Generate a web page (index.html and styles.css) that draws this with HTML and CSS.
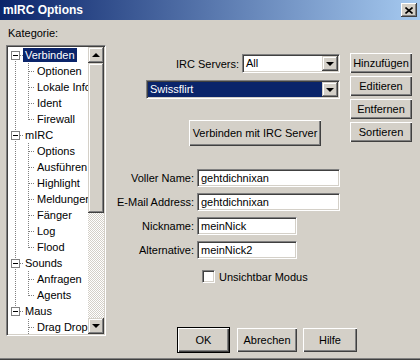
FILE: index.html
```html
<!DOCTYPE html>
<html lang="de">
<head>
    <meta charset="UTF-8">
    <title>mIRC Options</title>
    <link rel="stylesheet" href="styles.css">
</head>
<body>
    <div class="window">
        <div class="titlebar">
            <span>mIRC Options</span>
            <span class="close">
                <svg width="8" height="7" viewBox="0 0 8 7"><path d="M0.5 0.5 L7.5 6.5 M7.5 0.5 L0.5 6.5" stroke="#000" stroke-width="1.6"/></svg>
            </span>
        </div>

        <div class="content">
            <div class="left">
                <div class="caption">Kategorie:</div>
                <div class="tree">
                    <div class="tree-list">
                        <div class="row node first"><span class="gut"><span class="box"></span></span><span class="lbl sel">Verbinden</span></div>
                        <div class="row leaf"><span class="gut"></span><span class="gut2"></span><span class="lbl">Optionen</span></div>
                        <div class="row leaf"><span class="gut"></span><span class="gut2"></span><span class="lbl">Lokale Info</span></div>
                        <div class="row leaf"><span class="gut"></span><span class="gut2"></span><span class="lbl">Ident</span></div>
                        <div class="row leaf"><span class="gut"></span><span class="gut2 end"></span><span class="lbl">Firewall</span></div>
                        <div class="row node"><span class="gut"><span class="box"></span></span><span class="lbl">mIRC</span></div>
                        <div class="row leaf"><span class="gut"></span><span class="gut2"></span><span class="lbl">Options</span></div>
                        <div class="row leaf"><span class="gut"></span><span class="gut2"></span><span class="lbl">Ausführen</span></div>
                        <div class="row leaf"><span class="gut"></span><span class="gut2"></span><span class="lbl">Highlight</span></div>
                        <div class="row leaf"><span class="gut"></span><span class="gut2"></span><span class="lbl">Meldungen</span></div>
                        <div class="row leaf"><span class="gut"></span><span class="gut2"></span><span class="lbl">Fänger</span></div>
                        <div class="row leaf"><span class="gut"></span><span class="gut2"></span><span class="lbl">Log</span></div>
                        <div class="row leaf"><span class="gut"></span><span class="gut2 end"></span><span class="lbl">Flood</span></div>
                        <div class="row node"><span class="gut"><span class="box"></span></span><span class="lbl">Sounds</span></div>
                        <div class="row leaf"><span class="gut"></span><span class="gut2"></span><span class="lbl">Anfragen</span></div>
                        <div class="row leaf"><span class="gut"></span><span class="gut2 end"></span><span class="lbl">Agents</span></div>
                        <div class="row node last"><span class="gut"><span class="box"></span></span><span class="lbl">Maus</span></div>
                        <div class="row leaf"><span class="gut none"></span><span class="gut2"></span><span class="lbl">Drag Drop</span></div>
                    </div>
                    <div class="scrollbar">
                        <span class="sb-btn"><span class="tri-up"></span></span>
                        <span class="thumb"></span>
                        <span class="track"></span>
                        <span class="sb-btn"><span class="tri-down"></span></span>
                    </div>
                </div>
            </div>

            <div class="right">
                <div class="top">
                    <div class="main">
                        <div class="server-row">
                            <span>IRC Servers:</span>
                            <div class="select short"><span class="val">All</span><span class="drop"><span class="tri-down"></span></span></div>
                        </div>
                        <div class="select wide"><span class="val picked">Swissflirt</span><span class="drop"><span class="tri-down"></span></span></div>
                        <div class="btn connect">Verbinden mit IRC Server</div>
                    </div>
                    <div class="side">
                        <div class="btn">Hinzufügen</div>
                        <div class="btn">Editieren</div>
                        <div class="btn">Entfernen</div>
                        <div class="btn">Sortieren</div>
                    </div>
                </div>

                <div class="form">
                    <span class="label">Voller Name:</span>
                    <span class="field long">gehtdichnixan</span>
                    <span class="label">E-Mail Address:</span>
                    <span class="field long">gehtdichnixan</span>
                    <span class="label">Nickname:</span>
                    <span class="field">meinNick</span>
                    <span class="label">Alternative:</span>
                    <span class="field">meinNick2</span>
                </div>

                <div class="check-row">
                    <span class="checkbox"></span>
                    <span>Unsichtbar Modus</span>
                </div>

                <div class="footer">
                    <div class="btn default">OK</div>
                    <div class="btn cancel">Abrechen</div>
                    <div class="btn help">Hilfe</div>
                </div>
            </div>
        </div>
    </div>
</body>
</html>
```

FILE: styles.css
```css
body { margin: 0; font: 11px "Liberation Sans", Arial, sans-serif; color: #000; }
.window { width: 420px; height: 360px; background: #d4d0c8; display: flex; flex-direction: column; overflow: hidden; box-shadow: inset 0 -1px #404040, inset 0 -2px #808080; }

/* title bar */
.titlebar { height: 20px; padding: 0 3px 0 3px; display: flex; align-items: center; justify-content: space-between; background: linear-gradient(to right, #0a246a, #a6caf0); color: #fff; font-size: 12px; font-weight: bold; }
.close { width: 16px; height: 14px; display: flex; align-items: center; justify-content: center; background: #d4d0c8; box-shadow: inset -1px -1px #404040, inset 1px 1px #fff, inset -2px -2px #808080; }

.content { flex: 1; display: flex; }

/* category tree */
.left { width: 100px; margin-left: 6px; padding-top: 7px; }
.caption { height: 13px; line-height: 13px; padding-left: 2px; }
.tree { margin-top: 5px; height: 291px; box-sizing: border-box; display: flex; padding: 1px; background: #fff; border: 1px solid; border-color: #808080 #fff #fff #808080; box-shadow: inset 1px 1px #404040, inset -1px -1px #d4d0c8; }
.tree-list { flex: 1; overflow: hidden; }
.row { height: 16px; display: flex; align-items: center; white-space: nowrap; }

.gut { width: 15px; height: 16px; flex: none; display: flex; align-items: center;
    background: repeating-linear-gradient(to bottom, #808080 0 1px, transparent 1px 2px) 7px 0 / 1px 100% no-repeat; }
.node .gut { background:
    repeating-linear-gradient(to bottom, #808080 0 1px, transparent 1px 2px) 7px 0 / 1px 100% no-repeat,
    repeating-linear-gradient(to right, #808080 0 1px, transparent 1px 2px) 12px 8px / 3px 1px no-repeat; }
.node.first .gut { background:
    repeating-linear-gradient(to bottom, #808080 0 1px, transparent 1px 2px) 7px 100% / 1px 50% no-repeat,
    repeating-linear-gradient(to right, #808080 0 1px, transparent 1px 2px) 12px 8px / 3px 1px no-repeat; }
.node.last .gut { background:
    repeating-linear-gradient(to bottom, #808080 0 1px, transparent 1px 2px) 7px 0 / 1px 50% no-repeat,
    repeating-linear-gradient(to right, #808080 0 1px, transparent 1px 2px) 12px 8px / 3px 1px no-repeat; }
.gut.none { background: none; }
.box { width: 9px; height: 9px; box-sizing: border-box; margin-left: 3px; border: 1px solid #808080;
    background: linear-gradient(#000, #000) center / 5px 1px no-repeat, #fff; }

.gut2 { width: 12px; height: 16px; flex: none; background:
    repeating-linear-gradient(to bottom, #808080 0 1px, transparent 1px 2px) 5px 0 / 1px 100% no-repeat,
    repeating-linear-gradient(to right, #808080 0 1px, transparent 1px 2px) 6px 8px / 6px 1px no-repeat; }
.gut2.end { background:
    repeating-linear-gradient(to bottom, #808080 0 1px, transparent 1px 2px) 5px 0 / 1px 9px no-repeat,
    repeating-linear-gradient(to right, #808080 0 1px, transparent 1px 2px) 6px 8px / 6px 1px no-repeat; }

.lbl { padding: 0 2px; height: 14px; line-height: 14px; }
.lbl.sel { background: #0a246a; color: #fff; }

/* scrollbar */
.scrollbar { width: 16px; flex: none; display: flex; flex-direction: column;
    background: repeating-conic-gradient(#d4d0c8 0 25%, #fff 0 50%) 0 0 / 2px 2px; }
.sb-btn, .thumb, .drop { background: #d4d0c8; box-shadow: inset -1px -1px #404040, inset 1px 1px #d4d0c8, inset -2px -2px #808080, inset 2px 2px #fff; }
.sb-btn { height: 16px; display: flex; align-items: center; justify-content: center; }
.thumb { height: 150px; }
.track { flex: 1; }
.tri-up { width: 0; height: 0; border-left: 4px solid transparent; border-right: 4px solid transparent; border-bottom: 4px solid #000; }
.tri-down { width: 0; height: 0; border-left: 4px solid transparent; border-right: 4px solid transparent; border-top: 4px solid #000; }

/* right side */
.right { margin-left: 40px; padding-top: 34px; width: 266px; display: flex; flex-direction: column; }
.top { display: flex; }
.main { width: 194px; }
.side { width: 62px; margin-left: 10px; margin-top: -1px; display: flex; flex-direction: column; gap: 3px; }

.btn { height: 20px; display: flex; align-items: center; justify-content: center; box-sizing: border-box; background: #d4d0c8; white-space: nowrap;
    box-shadow: inset 1px 1px #fff, inset -1px -1px #404040, inset -2px -2px #808080; }

.server-row { height: 19px; display: flex; align-items: center; justify-content: flex-end; gap: 3px; }
.select { height: 19px; box-sizing: border-box; display: flex; padding: 1px; background: #fff; border: 1px solid; border-color: #808080 #fff #fff #808080; box-shadow: inset 1px 1px #404040, inset -1px -1px #d4d0c8; }
.select.short { width: 98px; }
.select.wide { margin-top: 7px; }
.val { flex: 1; padding-left: 2px; line-height: 15px; }
.val.picked { background: #0a246a; color: #fff; }
.drop { width: 16px; display: flex; align-items: center; justify-content: center; }

.connect { margin: 21px 0 0 43px; width: 132px; height: 26px; }

/* form */
.form { margin-top: 23px; display: grid; grid-template-columns: 48px max-content; column-gap: 3px; row-gap: 6px; align-items: center; }
.label { display: flex; justify-content: flex-end; white-space: nowrap; }
.field { width: 100px; height: 18px; box-sizing: border-box; padding: 1px 3px; line-height: 14px; background: #fff; border: 1px solid; border-color: #808080 #fff #fff #808080; box-shadow: inset 1px 1px #404040, inset -1px -1px #d4d0c8; }
.field.long { width: 143px; }

.check-row { margin: 11px 0 0 56px; height: 13px; display: flex; align-items: center; gap: 4px; }
.checkbox { width: 13px; height: 13px; box-sizing: border-box; background: #fff; border: 1px solid; border-color: #808080 #fff #fff #808080; box-shadow: inset 1px 1px #404040, inset -1px -1px #d4d0c8; }

/* dialog buttons */
.footer { margin: 44px 0 0 31px; display: flex; align-items: center; }
.btn.default { width: 53px; height: 26px; border: 1px solid #000; }
.btn.cancel { width: 60px; height: 24px; margin-left: 7px; }
.btn.help { width: 54px; height: 24px; margin-left: 6px; }
```
